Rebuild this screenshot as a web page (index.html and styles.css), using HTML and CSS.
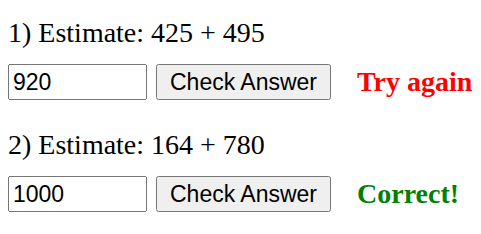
FILE: index.html
```html
<!DOCTYPE html>
<html lang="en">
<head>
    <meta charset="UTF-8">
    <title>Estimation Practice</title>
    <link rel="stylesheet" href="styles.css">
</head>
<body>
    <div class="question">
        <p class="prompt">1) Estimate: 425 + 495</p>
        <div class="answer-row">
            <input type="text" class="answer" value="920">
            <button class="check-btn">Check Answer</button>
            <span class="feedback wrong">Try again</span>
        </div>
    </div>

    <div class="question">
        <p class="prompt">2) Estimate: 164 + 780</p>
        <div class="answer-row">
            <input type="text" class="answer" value="1000">
            <button class="check-btn">Check Answer</button>
            <span class="feedback right">Correct!</span>
        </div>
    </div>
</body>
</html>
```

FILE: styles.css
```css
body {
    font-family: 'Liberation Serif', 'Times New Roman', serif;
    font-size: 28px;
    margin: 8px;
    color: #000;
}
.question {
    padding-top: 9px;
    margin-bottom: 20px;
}
.prompt {
    margin: 0 0 15px;
    line-height: 32px;
}
.answer-row {
    display: flex;
    align-items: center;
    height: 36px;
}
.answer {
    font-family: 'Liberation Sans', Arial, sans-serif;
    font-size: 23px;
    width: 139px;
    height: 36px;
    box-sizing: border-box;
    padding: 1px 3px;
    margin: 0 9px 0 0;
}
.check-btn {
    font-family: 'Liberation Sans', Arial, sans-serif;
    font-size: 23px;
    height: 36px;
    width: 175px;
    box-sizing: border-box;
    margin: 0 26px 0 0;
}
.feedback {
    font-weight: bold;
    font-size: 28px;
    line-height: 32px;
}
.wrong {
    color: red;
}
.right {
    color: green;
}
```
